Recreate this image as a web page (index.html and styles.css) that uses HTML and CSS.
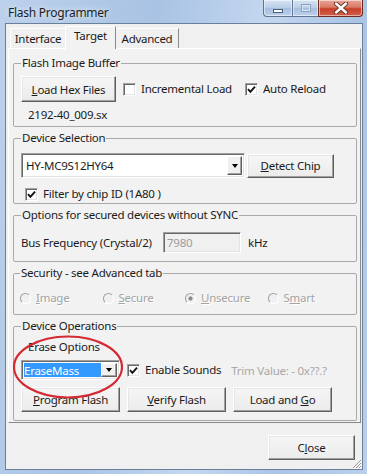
FILE: index.html
```html
<!doctype html>
<html lang="en">
  <head>
    <meta charset="UTF-8" />
    <meta name="viewport" content="width=device-width, initial-scale=1.0" />
    <title>Flash Programmer</title>
    <link rel="stylesheet" href="styles.css">
  </head>

  <body>
    <div class="window">
      <div class="titlebar">
        <span class="title">Flash Programmer</span>
        <div class="caption">
          <span class="cap-btn cap-min"><i></i></span>
          <span class="cap-btn cap-max"><i></i></span>
          <span class="cap-btn cap-close">
            <svg width="16" height="12" viewBox="0 0 16 12">
              <path d="M3 1.5 L13 10.5 M13 1.5 L3 10.5" stroke="#5a2a22" stroke-width="4.2" stroke-linecap="round" />
              <path d="M3 1.5 L13 10.5 M13 1.5 L3 10.5" stroke="#fff" stroke-width="2.4" stroke-linecap="round" />
            </svg>
          </span>
        </div>
      </div>

      <div class="client">
        <div class="tabs">
          <span class="tab tab-interface">Interface</span>
          <span class="tab tab-target active">Target</span>
          <span class="tab tab-advanced">Advanced</span>
        </div>

        <div class="panel">
          <fieldset class="group g-buffer">
            <legend>Flash Image Buffer</legend>
            <div class="row">
              <button class="btn btn-load"><u>L</u>oad Hex Files</button>
              <label class="check chk-incr"><span class="box"></span>Incremental Load</label>
              <label class="check chk-auto">
                <span class="box">
                  <svg width="9" height="9" viewBox="0 0 9 9"><path d="M1 4.2 L3.4 6.8 L8 1.6" fill="none" stroke="#111" stroke-width="1.9" /></svg>
                </span>Auto Reload
              </label>
            </div>
            <div class="filename">2192-40_009.sx</div>
          </fieldset>

          <fieldset class="group g-device">
            <legend>Device Selection</legend>
            <div class="row">
              <div class="combo combo-device">
                <span class="combo-text">HY-MC9S12HY64</span>
                <span class="combo-arrow"><i></i></span>
              </div>
              <button class="btn btn-detect"><u>D</u>etect Chip</button>
            </div>
            <label class="check chk-filter">
              <span class="box">
                <svg width="9" height="9" viewBox="0 0 9 9"><path d="M1 4.2 L3.4 6.8 L8 1.6" fill="none" stroke="#111" stroke-width="1.9" /></svg>
              </span>Filter by chip ID (1A80 )
            </label>
          </fieldset>

          <fieldset class="group g-sync">
            <legend>Options for secured devices without SYNC</legend>
            <div class="row">
              <span class="bus-label">Bus Frequency (Crystal/2)</span>
              <span class="field disabled">7980</span>
              <span class="unit">kHz</span>
            </div>
          </fieldset>

          <fieldset class="group g-security">
            <legend>Security - see Advanced tab</legend>
            <div class="radios">
              <span class="radio"><span class="dot"></span><u>I</u>mage</span>
              <span class="radio"><span class="dot"></span><u>S</u>ecure</span>
              <span class="radio on"><span class="dot"></span><u>U</u>nsecure</span>
              <span class="radio"><span class="dot"></span>S<u>m</u>art</span>
            </div>
          </fieldset>

          <fieldset class="group g-ops">
            <legend>Device Operations</legend>
            <div class="erase-label">Erase Options</div>
            <div class="row">
              <div class="combo combo-erase">
                <span class="combo-text"><span class="selected">EraseMass</span></span>
                <span class="combo-arrow"><i></i></span>
              </div>
              <label class="check chk-sounds">
                <span class="box">
                  <svg width="9" height="9" viewBox="0 0 9 9"><path d="M1 4.2 L3.4 6.8 L8 1.6" fill="none" stroke="#111" stroke-width="1.9" /></svg>
                </span>Enable Sounds
              </label>
              <span class="trim">Trim Value: - 0x??.?</span>
            </div>
            <div class="row op-buttons">
              <button class="btn btn-op"><u>P</u>rogram Flash</button>
              <button class="btn btn-op"><u>V</u>erify Flash</button>
              <button class="btn btn-op">Load and <u>G</u>o</button>
            </div>
          </fieldset>
        </div>

        <div class="footer">
          <button class="btn btn-close">C<u>l</u>ose</button>
          <svg class="grip" width="11" height="11" viewBox="0 0 11 11">
            <path d="M10 2 L2 10 M10 5 L5 10 M10 8 L8 10" stroke="#9a9a9a" stroke-width="1" />
            <path d="M11 3 L3 11 M11 6 L6 11 M11 9 L9 11" stroke="#fff" stroke-width="1" />
          </svg>
        </div>
      </div>

      <svg class="annotation" width="114" height="66" viewBox="0 0 114 66">
        <ellipse cx="56" cy="32" rx="54" ry="30.5" fill="none" stroke="#d52a34" stroke-width="2.2" />
      </svg>
    </div>
  </body>
</html>
```

FILE: styles.css
```css
* {
  box-sizing: border-box;
}

body {
  margin: 0;
  font-family: "Noto Sans", "Open Sans", sans-serif;
  font-size: 11.5px;
  letter-spacing: -0.25px;
  color: #1b1b1b;
  background: #fff;
}

.window {
  position: relative;
  width: 367px;
  height: 474px;
  display: flex;
  flex-direction: column;
  background: linear-gradient(100deg, #bcd1eb 0%, #a9c3e4 35%, #c3d7ef 60%, #abc4e5 80%, #b9cfea 100%);
}

/* title bar */

.titlebar {
  height: 24px;
  display: flex;
  justify-content: space-between;
  align-items: flex-start;
}

.title {
  padding-left: 8px;
  line-height: 25px;
  font-size: 12px;
  color: #1e1e1e;
  text-shadow: 0 0 6px rgba(255, 255, 255, 0.9);
}

.caption {
  display: flex;
  margin-right: 4px;
}

.cap-btn {
  height: 17px;
  display: flex;
  align-items: center;
  justify-content: center;
  border: 1px solid #5f7592;
  border-top: none;
  background: linear-gradient(#d7e4f3, #b9cde7 50%, #a6bedf 51%, #bcd1ea);
  box-shadow: inset 0 0 0 1px rgba(255, 255, 255, 0.5);
}

.cap-min {
  width: 29px;
  border-radius: 0 0 0 4px;
  border-right: none;
}

.cap-min i {
  width: 10px;
  height: 4px;
  margin-top: 5px;
  background: #fff;
  border: 1px solid #4b5f7a;
}

.cap-max {
  width: 26px;
  border-right: none;
}

.cap-max i {
  width: 10px;
  height: 8px;
  border: 1px solid #8da3bf;
  box-shadow: inset 0 0 0 1px #dbe6f3;
}

.cap-close {
  width: 45px;
  border-radius: 0 0 4px 0;
  border-color: #6d2a20;
  background: linear-gradient(#e8a898, #d77964 45%, #c7402a 55%, #d2604a);
}

/* client area */

.client {
  position: relative;
  flex: 1;
  margin: 0 5px 5px 6px;
  display: flex;
  flex-direction: column;
  background: #f0f0f0;
  box-shadow: 0 0 0 1px #6a7f9b;
}

.tabs {
  height: 24px;
  display: flex;
  align-items: flex-end;
  padding-left: 4px;
}

.tab {
  position: relative;
  height: 20px;
  line-height: 19px;
  text-align: center;
  background: #f0f0f0;
  border: 1px solid #fff;
  border-bottom: none;
  border-right-color: #8a8a8a;
}

.tab-interface {
  width: 55px;
  border-right: none;
}

.tab-target {
  width: 51px;
}

.tab-advanced {
  width: 63px;
  border-left: none;
}

.tab.active {
  height: 23px;
  line-height: 18px;
  margin-bottom: -1px;
  z-index: 1;
  background: #f2f2f2;
}

.panel {
  flex: none;
  height: 375px;
  margin: 0 1px 0 2px;
  padding: 7px 3px 1px 4px;
  background: #f2f2f2;
  border: 1px solid;
  border-color: #fff #8a8a8a #8a8a8a #fff;
}

/* group boxes */

.group {
  margin: 0;
  min-width: 0;
  padding: 6px 6px 4px 7px;
  border: 1px solid #a9a9a9;
  border-radius: 2px;
}

.group + .group {
  margin-top: 4px;
}

.group legend {
  padding: 0 1px;
  line-height: 14px;
}

.row {
  display: flex;
  align-items: center;
  white-space: nowrap;
}

.g-device {
  padding-top: 8px;
  padding-bottom: 2px;
}

.g-sync {
  padding-top: 10px;
  padding-bottom: 8px;
}

.g-security {
  padding-top: 11px;
  padding-bottom: 9px;
  padding-left: 6px;
}

.g-ops {
  padding-top: 7px;
  padding-bottom: 8px;
}

/* buttons */

.btn {
  height: 25px;
  padding: 0;
  font-family: inherit;
  font-size: inherit;
  letter-spacing: inherit;
  color: #1b1b1b;
  background: linear-gradient(#f6f6f6, #ebebeb);
  border: 1px solid;
  border-color: #fff #5f5f5f #5f5f5f #fff;
  box-shadow: inset -1px -1px #a0a0a0, inset 1px 1px #e6e6e6;
}

.btn-load {
  width: 95px;
  height: 26px;
}

.btn-detect {
  width: 87px;
  height: 24px;
  margin-left: 2px;
}

.btn-op {
  width: 99px;
}

.btn-op + .btn-op {
  margin-left: 7px;
}

.btn-close {
  width: 87px;
}

/* checkboxes */

.check {
  display: flex;
  align-items: center;
  line-height: 14px;
  white-space: nowrap;
}

.box {
  width: 13px;
  height: 13px;
  margin-right: 5px;
  display: flex;
  align-items: center;
  justify-content: center;
  background: #fff;
  border: 1px solid;
  border-color: #a0a0a0 #fff #fff #a0a0a0;
  box-shadow: inset 1px 1px #696969, inset -1px -1px #e3e3e3;
}

.chk-incr {
  margin-left: 7px;
}

.chk-auto {
  margin-left: 13px;
}

.chk-filter {
  margin: 9px 0 0 4px;
  width: 160px;
}

.chk-sounds {
  margin-left: 7px;
}

.filename {
  margin: 6px 0 0 7px;
  line-height: 14px;
}

/* combo boxes */

.combo {
  display: flex;
  padding: 2px;
  background: #fff;
  border: 1px solid;
  border-color: #a0a0a0 #fff #fff #a0a0a0;
  box-shadow: inset 1px 1px #696969, inset -1px -1px #e3e3e3;
}

.combo-device {
  width: 224px;
  height: 25px;
}

.combo-erase {
  width: 99px;
  height: 20px;
}

.combo-text {
  flex: 1;
  display: flex;
  align-items: center;
  padding-left: 2px;
}

.combo-erase .combo-text {
  padding-left: 0;
}

.selected {
  width: 77px;
  height: 100%;
  display: flex;
  align-items: center;
  color: #fff;
  background: #3399ff;
}

.combo-arrow {
  width: 15px;
  display: flex;
  align-items: center;
  justify-content: center;
  background: #f0f0f0;
  border: 1px solid;
  border-color: #fff #5f5f5f #5f5f5f #fff;
  box-shadow: inset -1px -1px #a0a0a0;
}

.combo-erase .combo-arrow {
  width: 17px;
}

.combo-arrow i {
  width: 0;
  height: 0;
  border-left: 3.5px solid transparent;
  border-right: 3.5px solid transparent;
  border-top: 4px solid #000;
}

/* bus frequency */

.bus-label {
  width: 142px;
}

.field {
  width: 78px;
  height: 21px;
  padding-left: 3px;
  display: flex;
  align-items: center;
  border: 1px solid;
  border-color: #a0a0a0 #fff #fff #a0a0a0;
  box-shadow: inset 1px 1px #696969, inset -1px -1px #e3e3e3;
}

.field.disabled {
  color: #9d9d9d;
  background: #f0f0f0;
}

.unit {
  margin-left: 7px;
}

/* radio buttons */

.radios {
  display: flex;
  line-height: 14px;
}

.radio {
  width: 85px;
  display: flex;
  align-items: center;
  color: #a3a3a3;
  text-shadow: 1px 1px #fff;
}

.dot {
  width: 11px;
  height: 11px;
  margin-right: 5px;
  border-radius: 50%;
  border: 1px solid;
  border-color: #a0a0a0 #fff #fff #a0a0a0;
  background: #f0f0f0;
}

.radio.on .dot {
  background: radial-gradient(circle, #8c8c8c 0 1.8px, #f0f0f0 2.4px);
}

/* device operations */

.erase-label {
  margin-left: 7px;
  line-height: 14px;
}

.g-ops .row {
  margin-top: 6px;
}

.g-ops .op-buttons {
  margin-top: 7px;
}

.trim {
  margin-left: 10px;
  color: #a8a8a8;
}

/* footer */

.footer {
  position: relative;
  flex: 1;
  display: flex;
  justify-content: flex-end;
  align-items: flex-start;
  padding: 12px 7px 0 0;
}

.grip {
  position: absolute;
  right: 0;
  bottom: 0;
}

.annotation {
  position: absolute;
  left: 12px;
  top: 335px;
}
```
